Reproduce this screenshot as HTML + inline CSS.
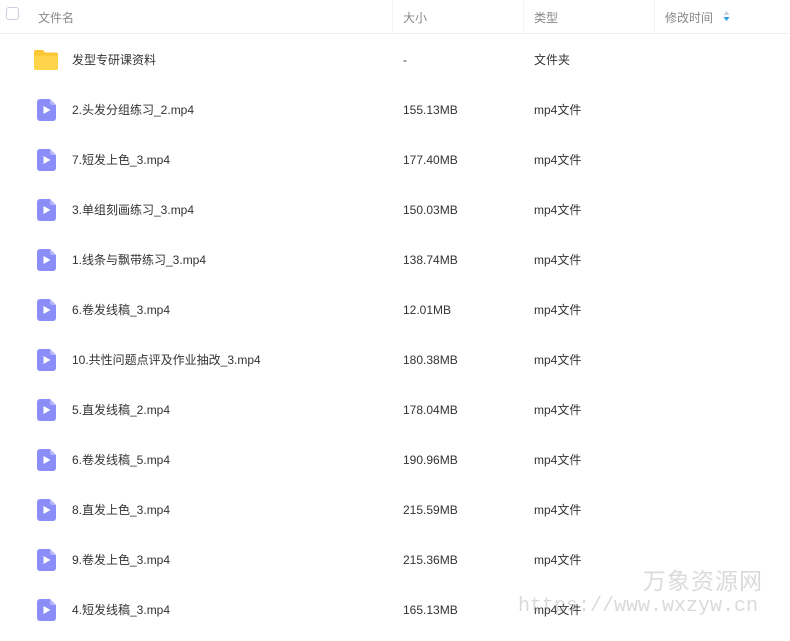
<!DOCTYPE html>
<html><head><meta charset="utf-8"><style>
*{margin:0;padding:0;box-sizing:border-box}
body{width:790px;height:641px;background:#fff;font-family:"Liberation Sans","Noto Sans CJK SC",sans-serif;font-size:12px;color:#333;position:relative;overflow:hidden}
.hdr{position:absolute;left:0;top:0;width:790px;height:34px;border-bottom:1px solid #eef0f3;color:#888}
.hdr span{position:absolute;top:9px}
.sep{position:absolute;top:0;width:1px;height:33px;background:#f3f4f6}
.cb{position:absolute;left:6px;top:7px;width:13px;height:13px;border:1px solid #ccd;border-radius:3px}
.row{position:absolute;left:0;width:790px;height:50px}
.row span{position:absolute;top:18px;line-height:14px}
.ic{position:absolute}
.wm{position:absolute;color:rgba(150,150,150,.35);white-space:nowrap;line-height:1}
</style></head><body>
<div class="hdr">
<div class="cb"></div>
<span style="left:38px">文件名</span>
<div class="sep" style="left:392px"></div>
<span style="left:403px">大小</span>
<div class="sep" style="left:523px"></div>
<span style="left:534px">类型</span>
<div class="sep" style="left:654px"></div>
<span style="left:665px">修改时间</span>
<svg style="position:absolute;left:723px;top:10px" width="7" height="12" viewBox="0 0 7 12"><path d="M3.5 1L6.5 5H0.5Z" fill="#c8d0da"/><path d="M3.5 11L6.5 7H0.5Z" fill="#2c9be8"/></svg>
</div>

<div class="row" style="top:35px">
<svg class="ic" style="left:33px;top:14px" width="26" height="22" viewBox="0 0 26 22"><path d="M1 3a2 2 0 0 1 2-2h7l2 2.5h11a2 2 0 0 1 2 2V19a2 2 0 0 1-2 2H3a2 2 0 0 1-2-2Z" fill="#fbc533"/><path d="M1 6.5h24V19a2 2 0 0 1-2 2H3a2 2 0 0 1-2-2Z" fill="#fdd44c"/></svg>
<span style="left:72px">发型专研课资料</span><span style="left:403px">-</span><span style="left:534px">文件夹</span>
</div>

<div id="rows"></div>
<script>
var d=[["2.头发分组练习_2.mp4","155.13MB"],["7.短发上色_3.mp4","177.40MB"],["3.单组刻画练习_3.mp4","150.03MB"],["1.线条与飘带练习_3.mp4","138.74MB"],["6.卷发线稿_3.mp4","12.01MB"],["10.共性问题点评及作业抽改_3.mp4","180.38MB"],["5.直发线稿_2.mp4","178.04MB"],["6.卷发线稿_5.mp4","190.96MB"],["8.直发上色_3.mp4","215.59MB"],["9.卷发上色_3.mp4","215.36MB"],["4.短发线稿_3.mp4","165.13MB"]];
var h="";d.forEach(function(r,i){var t=85+i*50;h+='<div class="row" style="top:'+t+'px"><svg class="ic" style="left:37px;top:14px" width="19" height="22" viewBox="0 0 19 22"><path d="M3 0h10l6 6v13a3 3 0 0 1-3 3H3a3 3 0 0 1-3-3V3a3 3 0 0 1 3-3Z" fill="#8b8ef8"/><path d="M13 0l6 6h-4a2 2 0 0 1-2-2Z" fill="#b5b7fb"/><path d="M6.5 7v8l7-4Z" fill="#fff"/></svg><span style="left:72px">'+r[0]+'</span><span style="left:403px">'+r[1]+'</span><span style="left:534px">mp4文件</span></div>';});
document.getElementById("rows").innerHTML=h;
</script>
<div class="wm" style="left:643px;top:570px;font-size:23px;letter-spacing:1px">万象资源网</div>
<div class="wm" style="left:518px;top:597px;font-size:20px;font-family:'Liberation Mono',monospace">https://www.wxzyw.cn</div>
</body></html>
